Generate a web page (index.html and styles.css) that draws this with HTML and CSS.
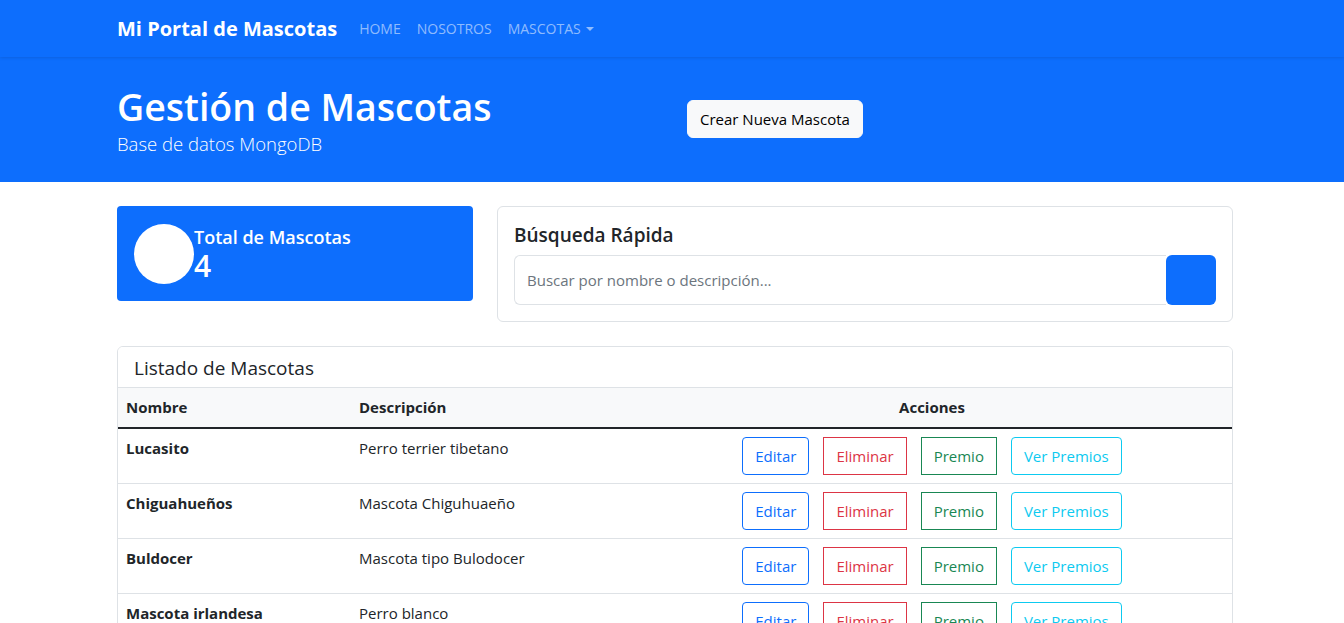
FILE: index.html
```html
<!DOCTYPE html>
<html lang="es">
<head>
<meta charset="utf-8">
<title>Mi Portal de Mascotas</title>
<link rel="stylesheet" href="styles.css">
</head>
<body>
<nav class="navbar">
  <div class="container nav-inner">
    <a class="brand" href="#">Mi Portal de Mascotas</a>
    <ul class="nav-links">
      <li><a href="#">HOME</a></li>
      <li><a href="#">NOSOTROS</a></li>
      <li><a href="#" class="dropdown">MASCOTAS</a></li>
    </ul>
  </div>
</nav>

<header class="hero">
  <div class="container hero-row">
    <div class="hero-col">
      <h1 class="hero-title">Gestión de Mascotas</h1>
      <p class="hero-lead">Base de datos MongoDB</p>
    </div>
    <div class="hero-col">
      <button class="btn btn-light">Crear Nueva Mascota</button>
    </div>
  </div>
</header>

<main class="container">
  <section class="stats-row">
    <div class="col-4">
      <div class="stat-card">
        <div class="stat-circle"></div>
        <div class="stat-text">
          <div class="stat-label">Total de Mascotas</div>
          <div class="stat-value">4</div>
        </div>
      </div>
    </div>
    <div class="col-8">
      <div class="card search-card">
        <h5 class="card-title">Búsqueda Rápida</h5>
        <div class="input-group">
          <input class="form-control" type="text" placeholder="Buscar por nombre o descripción...">
          <button class="btn-search" aria-label="Buscar"></button>
        </div>
      </div>
    </div>
  </section>

  <section class="card list-card">
    <div class="card-header">
      <h5 class="card-header-title">Listado de Mascotas</h5>
    </div>
    <table class="table">
      <thead>
        <tr>
          <th class="col-name">Nombre</th>
          <th class="col-desc">Descripción</th>
          <th class="col-actions">Acciones</th>
        </tr>
      </thead>
      <tbody>
        <tr>
          <td class="name">Lucasito</td>
          <td>Perro terrier tibetano</td>
          <td class="actions">
            <button class="btn btn-outline btn-blue">Editar</button>
            <button class="btn btn-outline btn-red">Eliminar</button>
            <button class="btn btn-outline btn-green">Premio</button>
            <button class="btn btn-outline btn-cyan">Ver Premios</button>
          </td>
        </tr>
        <tr>
          <td class="name">Chiguahueños</td>
          <td>Mascota Chiguhuaeño</td>
          <td class="actions">
            <button class="btn btn-outline btn-blue">Editar</button>
            <button class="btn btn-outline btn-red">Eliminar</button>
            <button class="btn btn-outline btn-green">Premio</button>
            <button class="btn btn-outline btn-cyan">Ver Premios</button>
          </td>
        </tr>
        <tr>
          <td class="name">Buldocer</td>
          <td>Mascota tipo Bulodocer</td>
          <td class="actions">
            <button class="btn btn-outline btn-blue">Editar</button>
            <button class="btn btn-outline btn-red">Eliminar</button>
            <button class="btn btn-outline btn-green">Premio</button>
            <button class="btn btn-outline btn-cyan">Ver Premios</button>
          </td>
        </tr>
        <tr>
          <td class="name">Mascota irlandesa</td>
          <td>Perro blanco</td>
          <td class="actions">
            <button class="btn btn-outline btn-blue">Editar</button>
            <button class="btn btn-outline btn-red">Eliminar</button>
            <button class="btn btn-outline btn-green">Premio</button>
            <button class="btn btn-outline btn-cyan">Ver Premios</button>
          </td>
        </tr>
      </tbody>
    </table>
  </section>
</main>
</body>
</html>
```

FILE: styles.css
```css
html {
  scrollbar-width: none;
}
html::-webkit-scrollbar {
  display: none;
}
* {
  box-sizing: border-box;
}
body {
  margin: 0;
  font-family: "Open Sans", "Noto Sans", "Liberation Sans", sans-serif;
  font-size: 16px;
  line-height: 1.5;
  color: #212529;
  background: #fff;
}
.container {
  width: 1140px;
  padding: 0 12px;
  margin-left: calc(50% - 567px);
}

/* Navbar */
.navbar {
  background: #0d6efd;
  height: 57px;
  box-shadow: 0 1px 3px rgba(0, 0, 0, 0.12);
  position: relative;
  z-index: 1;
}
.nav-inner {
  display: flex;
  align-items: center;
  height: 100%;
}
.brand {
  color: #fff;
  font-weight: 700;
  font-size: 20px;
  text-decoration: none;
  margin-right: 14px;
}
.nav-links {
  list-style: none;
  display: flex;
  margin: 0;
  padding: 0;
}
.nav-links a {
  display: block;
  padding: 8px;
  font-size: 14px;
  color: rgba(255, 255, 255, 0.55);
  text-decoration: none;
}
.dropdown::after {
  content: "";
  display: inline-block;
  margin-left: 5px;
  vertical-align: 3px;
  border-top: 4.5px solid rgba(255, 255, 255, 0.55);
  border-left: 4px solid transparent;
  border-right: 4px solid transparent;
}

/* Hero */
.hero {
  background: #0d6efd;
  color: #fff;
  height: 125px;
  display: flex;
  align-items: center;
}
.hero-row {
  display: flex;
  align-items: center;
}
.hero-col {
  width: 50%;
}
.hero-col + .hero-col {
  padding-left: 12px;
}
.hero-title {
  margin: 0;
  font-size: 37.5px;
  font-weight: 600;
  line-height: 1.2;
  padding-top: 2px;
}
.hero-lead {
  margin: 2px 0 0;
  font-size: 18.5px;
  font-weight: 300;
  line-height: 1.4;
}

/* Buttons */
.btn {
  font-family: inherit;
  font-size: 16px;
  line-height: 24px;
  padding: 6px 12px;
  border: 1px solid transparent;
  border-radius: 6px;
  cursor: pointer;
}
.btn-light {
  background: #f8f9fa;
  border-color: #f8f9fa;
  color: #000;
  font-size: 15px;
}
.btn-outline {
  background: transparent;
  border-radius: 4px;
  font-size: 15px;
}
.btn-blue { color: #0d6efd; border-color: #0d6efd; }
.btn-red { color: #dc3545; border-color: #dc3545; border-radius: 0; }
.btn-green { color: #198754; border-color: #198754; border-radius: 0; }
.btn-cyan { color: #0dcaf0; border-color: #0dcaf0; }

/* Stats row */
.stats-row {
  display: flex;
  gap: 24px;
  margin-top: 24px;
  align-items: flex-start;
}
.col-4 {
  width: 356px;
  flex: none;
}
.col-8 {
  flex: 1;
}
.stat-card {
  background: #0d6efd;
  border-radius: 4px;
  height: 95px;
  padding: 0 17px;
  display: flex;
  align-items: center;
  color: #fff;
}
.stat-circle {
  width: 60px;
  height: 60px;
  border-radius: 50%;
  background: #fff;
  flex: none;
}
.stat-text {
  margin-top: 2px;
}
.stat-label {
  font-size: 18px;
  font-weight: 600;
  line-height: 1.2;
}
.stat-value {
  font-size: 30px;
  font-weight: 600;
  line-height: 1.1;
}

.card {
  border: 1px solid #dee2e6;
  border-radius: 6px;
  background: #fff;
}
.search-card {
  padding: 16px;
}
.card-title {
  margin: 0 0 8px;
  font-size: 19px;
  font-weight: 600;
  line-height: 24px;
}
.input-group {
  display: flex;
  height: 50px;
}
.form-control {
  flex: 1;
  min-width: 0;
  font-family: inherit;
  font-size: 15px;
  padding: 0 12px;
  border: 1px solid #dee2e6;
  border-right: none;
  border-radius: 6px 0 0 6px;
  color: #212529;
}
.form-control::placeholder {
  color: #6c757d;
}
.btn-search {
  width: 50px;
  flex: none;
  background: #0d6efd;
  border: none;
  border-radius: 6px;
}

/* List card */
.list-card {
  margin-top: 24px;
  overflow: hidden;
}
.card-header {
  height: 41px;
  padding: 0 16px;
  display: flex;
  align-items: center;
  border-bottom: 1px solid #dee2e6;
  background: #fff;
}
.card-header-title {
  margin: 0;
  font-size: 19px;
  font-weight: 500;
  padding-top: 2px;
}
.table {
  width: 100%;
  border-collapse: collapse;
}
.table th,
.table td {
  padding: 8px;
  text-align: left;
  vertical-align: top;
  font-size: 15px;
}
.table thead th {
  background: #f8f9fa;
  font-weight: 700;
  border-bottom: 2px solid #212529;
}
.table tbody td {
  border-bottom: 1px solid #dee2e6;
}
.col-name { width: 233px; }
.col-desc { width: 281px; }
.table th.col-actions {
  text-align: center;
}
.name {
  font-weight: 700;
}
.table td.actions {
  text-align: center;
  font-size: 0;
}
.actions .btn {
  margin: 0 7px;
  font-size: 15px;
}
```
